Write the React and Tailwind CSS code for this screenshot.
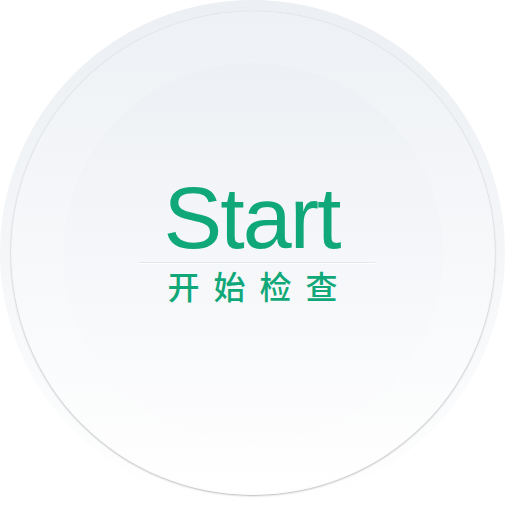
import React from 'react';

const App = () => {
    return (
        <div className="w-[505px] h-[505px] bg-white flex items-center justify-center overflow-hidden">
            <div className="w-[505px] h-[505px] rounded-full bg-gradient-to-b from-[#eceff3] via-[#f4f6f8] to-white flex items-center justify-center">
                <div className="w-[484px] h-[484px] rounded-full bg-gradient-to-b from-[#eef1f5] to-[#ffffff] shadow-[0_1px_2px_rgba(0,0,0,0.28),inset_0_0_1px_rgba(0,0,0,0.12)] flex items-center justify-center">
                    <div className="w-[380px] h-[380px] rounded-full bg-gradient-to-b from-[#edf0f4] to-[#fdfdfe] flex flex-col items-center pt-[111px]">
                        <div
                            className="text-[88px] leading-none tracking-[-2px] text-[#10a878] ml-[-2px]"
                            style={{ fontFamily: '"Liberation Sans", Arial, sans-serif' }}
                        >
                            Start
                        </div>
                        <div className="w-[236px] h-px bg-[#e3e6ea] mt-0 ml-[8px] shadow-[0_1px_0_#ffffff]" />
                        <div
                            className="mt-[6px] text-[32px] leading-none tracking-[14px] ml-[14px] text-[#10a878] font-medium"
                            style={{ fontFamily: '"Noto Sans CJK SC", sans-serif' }}
                        >
                            开始检查
                        </div>
                    </div>
                </div>
            </div>
        </div>
    );
};

export default App;
